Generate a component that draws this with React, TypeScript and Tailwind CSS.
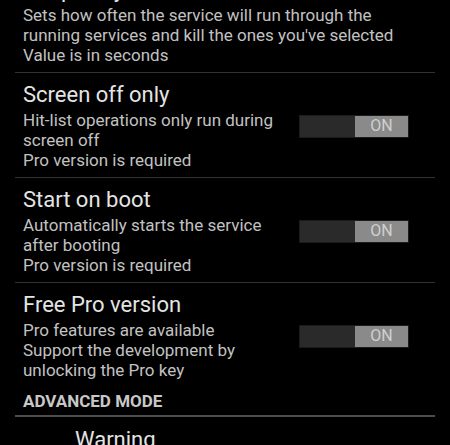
import React from 'react'

type Pref = {
  title: string
  summary: string[]
  toggle?: boolean
}

const prefs: Pref[] = [
  {
    title: 'Frequency',
    summary: [
      'Sets how often the service will run through the running services and kill the ones you\'ve selected',
      'Value is in seconds',
    ],
  },
  {
    title: 'Screen off only',
    summary: ['Hit-list operations only run during screen off', 'Pro version is required'],
    toggle: true,
  },
  {
    title: 'Start on boot',
    summary: ['Automatically starts the service after booting', 'Pro version is required'],
    toggle: true,
  },
  {
    title: 'Free Pro version',
    summary: ['Pro features are available', 'Support the development by unlocking the Pro key'],
    toggle: true,
  },
]

const Toggle: React.FC = () => (
  <div className="flex w-[108px] h-[21px] shrink-0 outline outline-1 outline-[#1c1c1c]">
    <div className="w-[55px] bg-[#2a2a2a]" />
    <div className="flex-1 bg-[#8a8a8a] flex items-center justify-center text-[16px] leading-none text-[#d0d0d0]">
      ON
    </div>
  </div>
)

const Divider: React.FC = () => <div className="mx-[15px] h-px bg-[#323232]" />

const PrefRow: React.FC<{ pref: Pref }> = ({ pref }) => (
  <div className="flex items-center pl-[23px] pr-[42px] pt-[9px] pb-[7px]">
    <div className={pref.toggle ? 'flex-1 pr-[10px]' : 'flex-1 pr-[5px]'}>
      <p className="text-[22px] leading-[26px] text-[#e4e4e4]">{pref.title}</p>
      <div className="mt-[2px] text-[17px] leading-[20px] text-[#c2c2c2]">
        {pref.summary.map((line) => (
          <p key={line}>{line}</p>
        ))}
      </div>
    </div>
    {pref.toggle && <Toggle />}
  </div>
)

const App: React.FC = () => {
  return (
    <div className="w-[450px] h-[445px] overflow-hidden bg-black font-['Roboto',sans-serif]">
      <div className="-mt-[32px]">
        {prefs.map((pref, i) => (
          <React.Fragment key={pref.title}>
            {i > 0 && <Divider />}
            <PrefRow pref={pref} />
          </React.Fragment>
        ))}

        {/* Advanced section */}
        <div className="pl-[23px] pt-[4px] pb-[4px]">
          <p className="text-[17px] leading-[20px] font-bold text-[#c8c8c8]">ADVANCED MODE</p>
        </div>
        <div className="mx-[15px] h-[2px] bg-[#4c4c4c]" />
        <p className="mt-[10px] pl-[75px] text-[22px] leading-[26px] text-[#e4e4e4]">Warning</p>
      </div>
    </div>
  )
}

export default App
